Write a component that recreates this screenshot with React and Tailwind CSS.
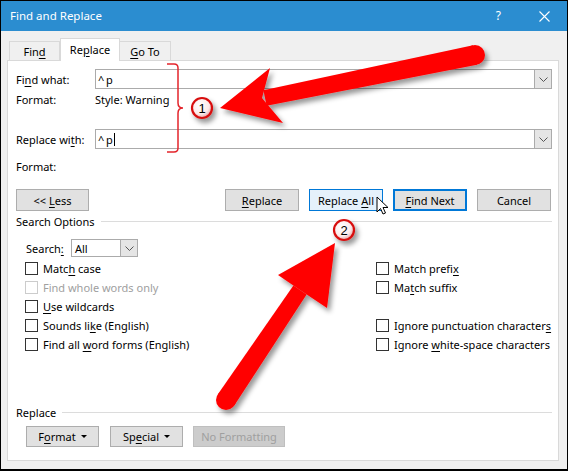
import clsx from 'clsx';

function U({ children }) {
  return <span className="underline underline-offset-[2px] decoration-1">{children}</span>;
}

function Chevron() {
  return (
    <svg width="9" height="5" viewBox="0 0 9 5">
      <path d="M0.5 0.5 L4.5 4.5 L8.5 0.5" fill="none" stroke="#555" strokeWidth="1" />
    </svg>
  );
}

function Combo({ value, caret }) {
  return (
    <div className="flex h-[20px] flex-1 items-stretch border border-[#ababab] bg-white">
      <div className="flex flex-1 items-center pl-[2px]">
        {value}
        {caret && <span className="ml-px h-[13px] w-px bg-black" />}
      </div>
      <div className="flex w-[17px] items-center justify-center border-l border-[#ababab] bg-[#e5e5e5]">
        <Chevron />
      </div>
    </div>
  );
}

function Btn({ children, className, w = 'w-[74px]' }) {
  return (
    <div className={clsx('flex items-center justify-center', w, className || 'border border-[#adadad] bg-[#e1e1e1]')}>
      {children}
    </div>
  );
}

function Check({ children, disabled }) {
  return (
    <div className="flex h-[19px] items-center">
      <span className={clsx('h-[13px] w-[13px] border bg-white', disabled ? 'border-[#cccccc]' : 'border-[#333333]')} />
      <span className={clsx('ml-[5px]', disabled ? 'text-[#a0a0a0]' : 'text-black')}>{children}</span>
    </div>
  );
}

function Caret() {
  return <span className="ml-[5px] inline-block h-0 w-0 border-x-[3px] border-t-[3px] border-x-transparent border-t-black align-middle" />;
}

function Overlay() {
  return (
    <svg className="pointer-events-none absolute -left-px -top-px" width="568" height="471" viewBox="0 0 568 471">
      <defs>
        <filter id="sh" x="-20%" y="-20%" width="140%" height="140%">
          <feDropShadow dx="3" dy="4" stdDeviation="2.5" floodColor="#000" floodOpacity="0.4" />
        </filter>
        <radialGradient id="badge" cx="40%" cy="35%" r="65%">
          <stop offset="0%" stopColor="#ffffff" />
          <stop offset="70%" stopColor="#fbe9e9" />
          <stop offset="100%" stopColor="#e9a8a8" />
        </radialGradient>
      </defs>

      {/* bracket */}
      <path
        d="M167 64 H174 Q178 64 178 68 V103 Q178 108 183 108 Q178 108 178 113 V148 Q178 152 174 152 H167"
        fill="none"
        stroke="#e3242b"
        strokeWidth="1.5"
      />

      {/* arrow 1 */}
      <g filter="url(#sh)" fill="#ff0000">
        <circle cx="475" cy="55" r="10" />
        <polygon points="476.96,64.8 473.04,45.2 263.4,90.2 266.6,105.8" />
        <polygon points="220,108 270,68 262,98 283,123" />
      </g>

      {/* arrow 2 */}
      <g filter="url(#sh)" fill="#ff0000">
        <circle cx="226" cy="400" r="10" />
        <polygon points="234.3,405.6 217.7,394.4 293.4,285.5 306.6,294.5" />
        <polygon points="335,243 278,275 300,290 327,308" />
      </g>

      {/* badges */}
      <g filter="url(#sh)">
        <circle cx="202" cy="108" r="10" fill="url(#badge)" stroke="#d81010" strokeWidth="2.2" />
        <circle cx="344" cy="230" r="10" fill="url(#badge)" stroke="#d81010" strokeWidth="2.2" />
      </g>
      <text x="202" y="112.5" textAnchor="middle" fontSize="13" fontFamily="Liberation Sans, sans-serif" fill="#000">1</text>
      <text x="344" y="234.5" textAnchor="middle" fontSize="13" fontFamily="Liberation Sans, sans-serif" fill="#000">2</text>

      {/* mouse cursor */}
      <g transform="translate(377 197)">
        <path d="M0 0 L0 15 L3.5 11.5 L6 17 L8.5 16 L6 10.5 L11 10.5 Z" fill="#fff" stroke="#000" strokeWidth="1" strokeLinejoin="round" />
      </g>
    </svg>
  );
}

export default function App() {
  return (
    <div className="relative h-[471px] w-[568px] border border-b-2 border-black bg-[#f0f0f0] font-['Noto_Sans',sans-serif] text-[11px] leading-none text-black">
      {/* title bar */}
      <div className="flex h-[30px] items-center bg-[#2b8dd0] text-white">
        <span className="pl-[9px] text-[11.5px]">Find and Replace</span>
        <span className="ml-auto text-[12px]">?</span>
        <svg className="ml-[38px] mr-[17px]" width="11" height="11" viewBox="0 0 11 11">
          <path d="M0.5 0.5 L10.5 10.5 M10.5 0.5 L0.5 10.5" stroke="#fff" strokeWidth="1.1" />
        </svg>
      </div>

      {/* tabs */}
      <div className="relative z-10 ml-[8px] mt-[7px] flex items-end">
        <div className="flex h-[19px] w-[51px] items-center justify-center border border-b-0 border-[#d9d9d9] bg-[#f0f0f0]">
          Fin<U>d</U>
        </div>
        <div className="-mb-px flex h-[23px] w-[60px] items-center justify-center border border-b-0 border-[#d9d9d9] bg-white pb-[2px]">
          Re<U>p</U>lace
        </div>
        <div className="flex h-[19px] w-[51px] items-center justify-center border border-b-0 border-l-0 border-[#d9d9d9] bg-[#f0f0f0]">
          <U>G</U>o To
        </div>
      </div>

      {/* panel */}
      <div className="ml-[6px] flex h-[401px] w-[552px] flex-col border border-[#d9d9d9] bg-white pl-[8px] pr-[6px] pt-[8px]">
        <div className="flex h-[20px] items-center">
          <span className="w-[79px]">Fi<U>n</U>d what:</span>
          <Combo value={'^\u2009p'} />
        </div>
        <div className="flex h-[20px] items-center">
          <span className="w-[79px]">Format:</span>
          <span>Style: Warning</span>
        </div>
        <div className="mt-[20px] flex h-[20px] items-center">
          <span className="w-[79px]">Replace wi<U>t</U>h:</span>
          <Combo value={'^\u2009p'} caret />
        </div>
        <div className="mt-[7px] flex h-[20px] items-center">
          <span>Format:</span>
        </div>

        <div className="mt-[13px] flex h-[22px]">
          <Btn w="w-[73px]">
            &lt;&lt; <span className="ml-[3px]"><U>L</U>ess</span>
          </Btn>
          <div className="ml-auto mr-px flex gap-[10px]">
            <Btn>
              <U>R</U>eplace
            </Btn>
            <Btn className="border border-[#0078d7] bg-[#e5f1fb]">
              Replace <span className="ml-[3px]"><U>A</U>ll</span>
            </Btn>
            <Btn className="border-2 border-[#0078d7] bg-[#e1e1e1]">
              <U>F</U>ind Next
            </Btn>
            <Btn>Cancel</Btn>
          </div>
        </div>

        <div className="flex h-[20px] items-center">
          <span>Search Options</span>
          <div className="ml-[6px] h-px flex-1 bg-[#dcdcdc]" />
        </div>

        <div className="mt-[8px] flex h-[18px] items-center pl-[10px]">
          <span className="w-[45px]">
            Search<U>:</U>
          </span>
          <div className="flex h-[18px] w-[67px] items-stretch border border-[#ababab] bg-white">
            <div className="flex flex-1 items-center pl-[3px]">All</div>
            <div className="flex w-[17px] items-center justify-center border-l border-[#ababab] bg-[#e5e5e5]">
              <Chevron />
            </div>
          </div>
        </div>

        <div className="mt-[2px] flex pl-[9px]">
          <div className="w-[351px]">
            <Check>
              Matc<U>h</U> case
            </Check>
            <Check disabled>Find whole words only</Check>
            <Check>
              <U>U</U>se wildcards
            </Check>
            <Check>
              Sounds li<U>k</U>e (English)
            </Check>
            <Check>
              Find all <U>w</U>ord forms (English)
            </Check>
          </div>
          <div>
            <Check>
              Match prefi<U>x</U>
            </Check>
            <Check>
              Ma<U>t</U>ch suffix
            </Check>
            <div className="h-[19px]" />
            <Check>
              Ignore punctuation character<U>s</U>
            </Check>
            <Check>
              Ignore <U>w</U>hite-space characters
            </Check>
          </div>
        </div>

        <div className="mt-[48px] flex h-[20px] items-center">
          <span>Replace</span>
          <div className="ml-[6px] h-px flex-1 bg-[#dcdcdc]" />
        </div>

        <div className="mt-[4px] flex h-[21px] pl-[10px]">
          <Btn w="w-[73px]">
            F<U>o</U>rmat
            <Caret />
          </Btn>
          <Btn w="w-[73px] ml-[11px]">
            Sp<U>e</U>cial
            <Caret />
          </Btn>
          <Btn w="w-[92px] ml-[10px]" className="border border-[#bfbfbf] bg-[#cccccc] text-[#9f9f9f]">
            No Formatting
          </Btn>
        </div>
      </div>

      <Overlay />
    </div>
  );
}
